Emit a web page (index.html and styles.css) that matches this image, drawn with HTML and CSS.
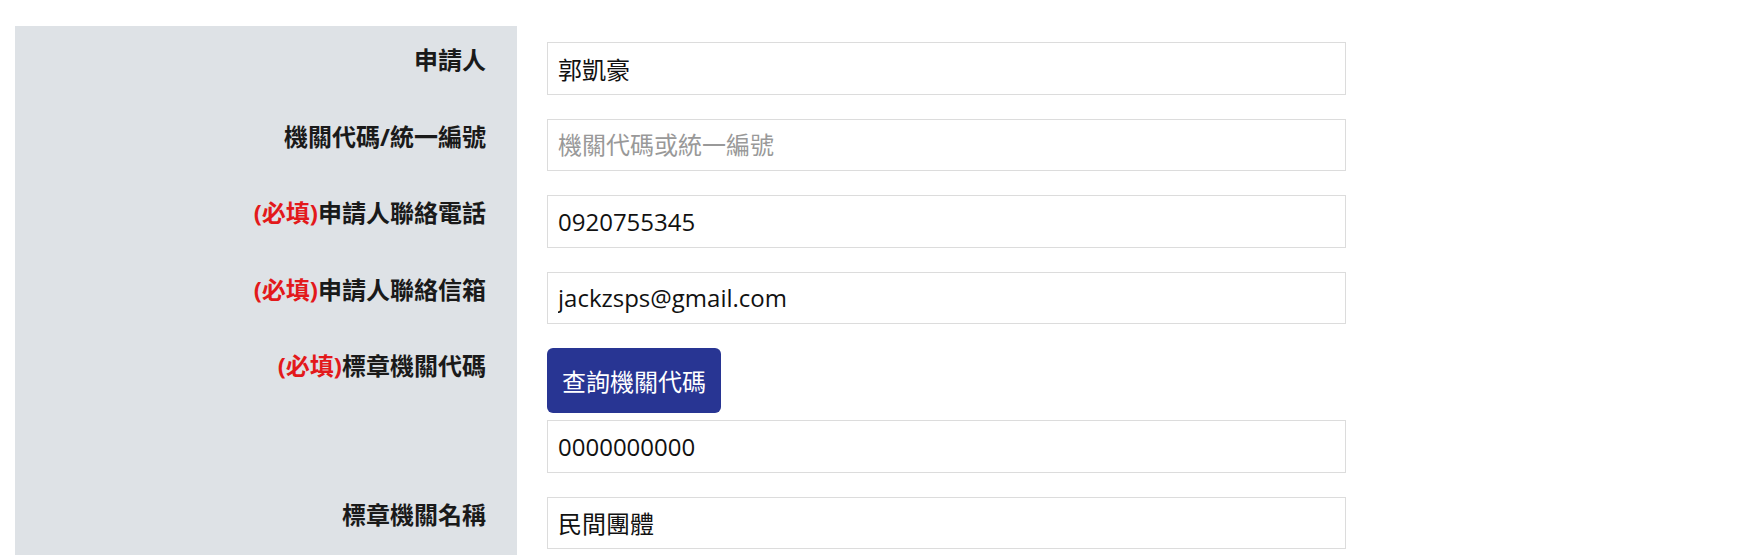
FILE: index.html
```html
<!DOCTYPE html>
<html lang="zh-Hant">
<head>
<meta charset="utf-8">
<title>申請表</title>
<link rel="stylesheet" href="styles.css">
</head>
<body>
<div class="page">
  <form class="form">
    <div class="row">
      <label class="label">申請人</label>
      <div class="field"><input class="input" type="text" value="郭凱豪"></div>
    </div>
    <div class="row">
      <label class="label">機關代碼/統一編號</label>
      <div class="field"><input class="input" type="text" placeholder="機關代碼或統一編號"></div>
    </div>
    <div class="row">
      <label class="label"><span class="req">(必填)</span>申請人聯絡電話</label>
      <div class="field"><input class="input" type="text" value="0920755345"></div>
    </div>
    <div class="row">
      <label class="label"><span class="req">(必填)</span>申請人聯絡信箱</label>
      <div class="field"><input class="input" type="text" value="jackzsps@gmail.com"></div>
    </div>
    <div class="row">
      <label class="label"><span class="req">(必填)</span>標章機關代碼</label>
      <div class="field field-stack">
        <button class="btn" type="button">查詢機關代碼</button>
        <input class="input" type="text" value="0000000000">
      </div>
    </div>
    <div class="row">
      <label class="label">標章機關名稱</label>
      <div class="field"><input class="input" type="text" value="民間團體"></div>
    </div>
  </form>
</div>
</body>
</html>
```

FILE: styles.css
```css
html, body {
  margin: 0;
  padding: 0;
  background: #ffffff;
}

body {
  font-family: "Open Sans", "Noto Sans CJK TC", sans-serif;
  font-size: 24px;
  color: #1a1a1a;
}

.page {
  padding: 26px 0 0 15px;
}

.form {
  width: 1331px;
  padding-top: 16px;
  background: linear-gradient(to right, #dee2e6 0, #dee2e6 502px, transparent 502px);
}

.row {
  display: grid;
  grid-template-columns: 502px 799px;
  column-gap: 30px;
  align-items: start;
}

.label {
  display: block;
  text-align: right;
  padding-right: 31px;
  font-weight: 700;
  line-height: 36px;
  color: #1a1a1a;
}

.req {
  color: #e3191b;
}

.field {
  display: flex;
  flex-direction: column;
  gap: 7px;
  padding-bottom: 24px;
}

.input {
  box-sizing: border-box;
  width: 799px;
  height: 52.5px;
  margin: 0;
  padding: 0 10px;
  border: 1px solid #dcdcdc;
  border-radius: 0;
  background: #ffffff;
  font: inherit;
  font-size: 24px;
  color: #111111;
  outline: none;
}

.input::placeholder {
  color: #999999;
}

.btn {
  align-self: flex-start;
  box-sizing: border-box;
  height: 65px;
  padding: 0 15px;
  margin: 0;
  border: none;
  border-radius: 6px;
  background: #283593;
  color: #ffffff;
  font: inherit;
  font-size: 24px;
  cursor: pointer;
}
```
